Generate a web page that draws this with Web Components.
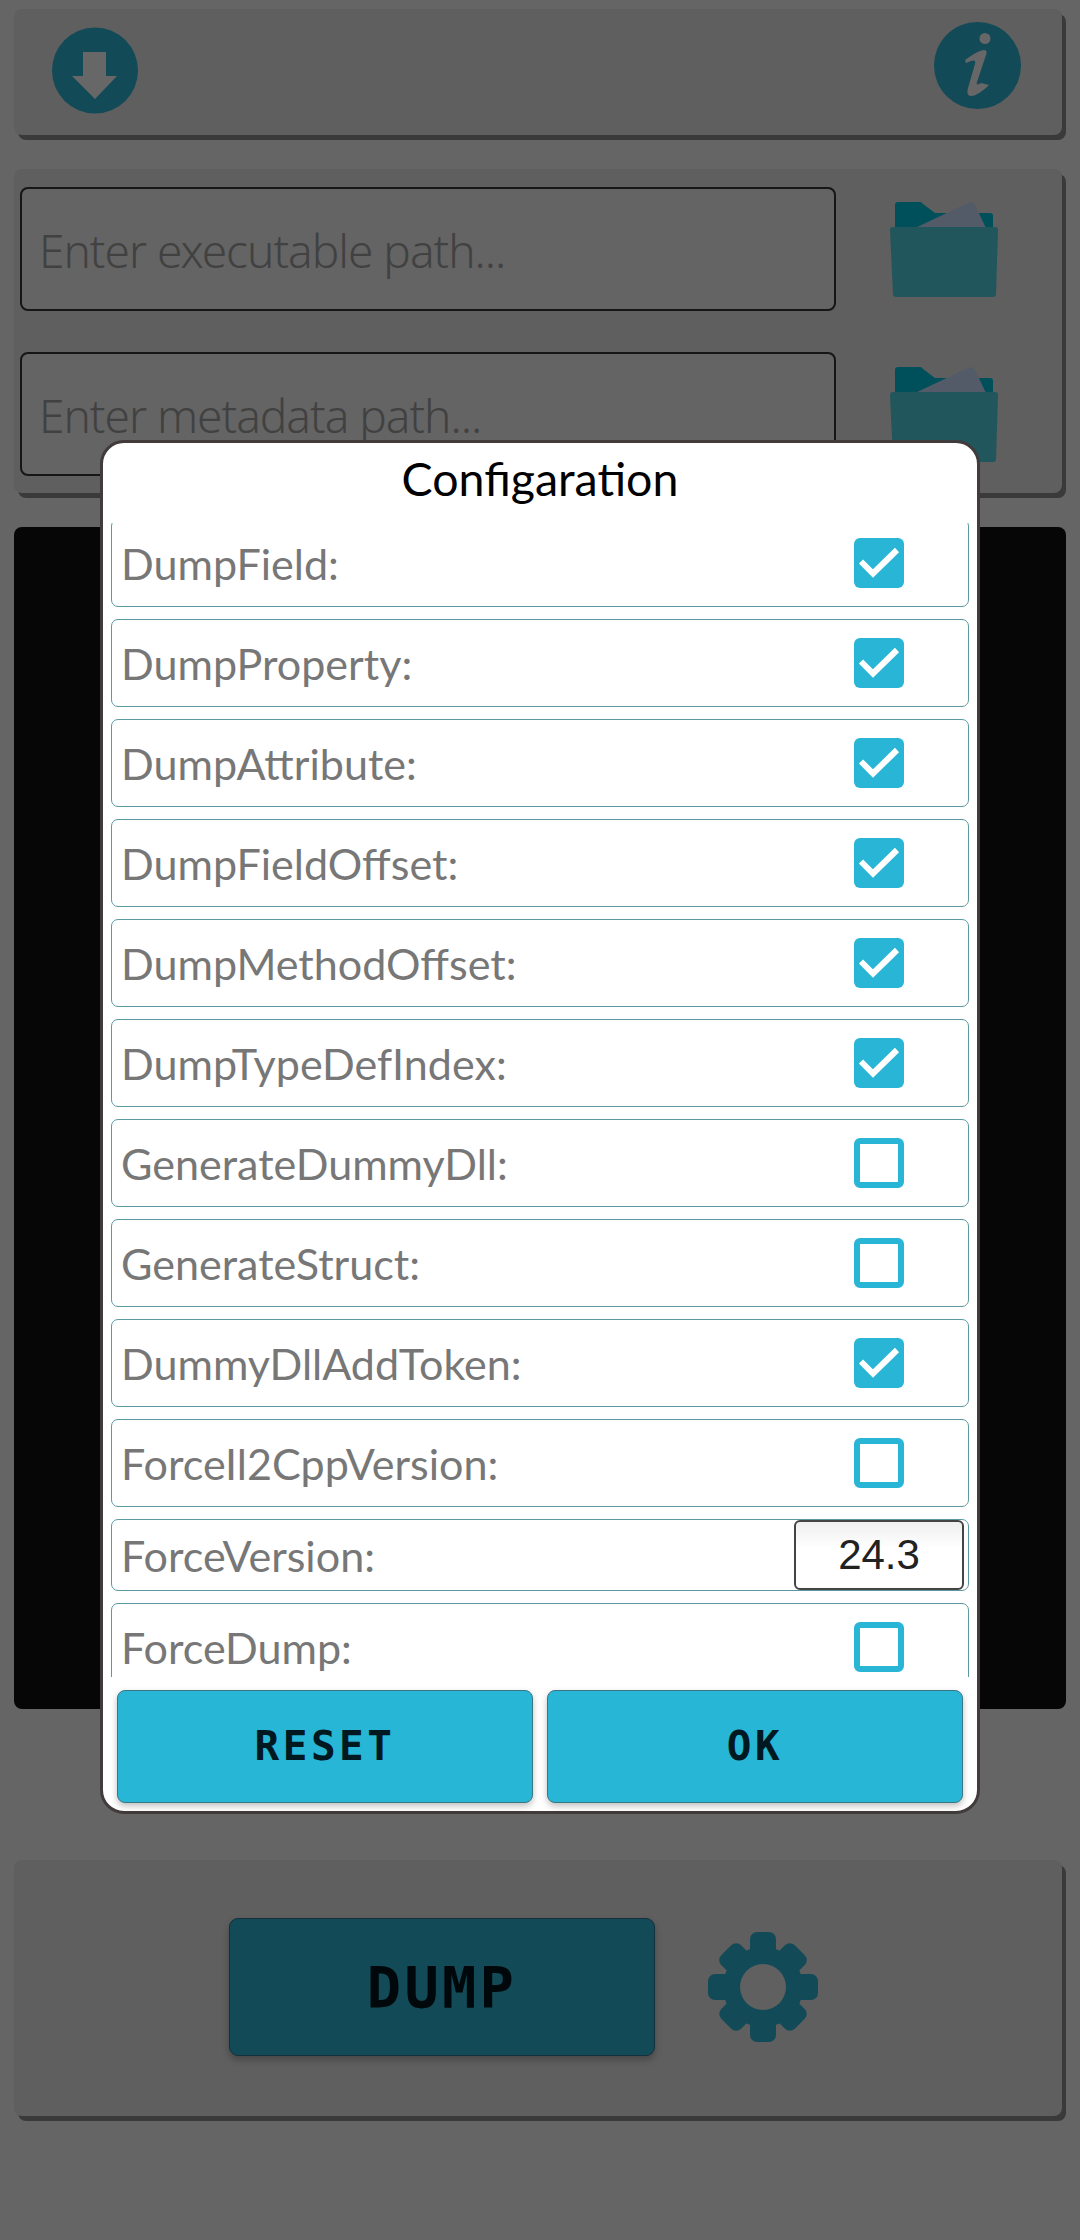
<!DOCTYPE html>
<html lang="en"><head><meta charset="utf-8"><title>Il2CppDumper</title>
<style>
html,body{margin:0;padding:0;background:#656565;}
body{width:1080px;height:2240px;overflow:hidden;position:relative;font-family:"Lato",sans-serif;}
</style></head><body>
<dump-app></dump-app>
<script>
function def(name, html, init){
  customElements.define(name, class extends HTMLElement{
    constructor(){super();this.attachShadow({mode:'open'}).innerHTML=html;}
    connectedCallback(){ if(init) init(this); }
  });
}
def('app-panel',`<style>
:host{display:block;box-sizing:border-box;background:#5f5f5f;border-radius:8px;box-shadow:4px 5px 0 0 #3a3a3a;margin-right:4px;}
</style><slot></slot>`);

def('icon-download',`<style>:host{display:block;width:86px;height:87px}svg{display:block}</style>
<svg width="86" height="87" viewBox="0 0 86 87"><circle cx="43" cy="43.5" r="43" fill="#124b57"/><path d="M31 25H54V49H65L43 72 20 49H31Z" fill="#676767"/></svg>`);

def('icon-info',`<style>:host{display:block;width:87px;height:87px}svg{display:block}</style>
<svg width="87" height="87" viewBox="0 0 87 87"><circle cx="43.5" cy="43.5" r="43.5" fill="#124b57"/><circle cx="51" cy="16.5" r="5.5" fill="#676767"/><path d="M31 38C38 33 44 29 50 28 53 28 53 31 52 33L43 60C42 63 44 63 47 61L55 63C49 69 42 74 37 74 33 74 33 70 34 66L41 42C42 38 40 38 37 39L32 41Z" fill="#676767"/></svg>`);

def('icon-folder',`<style>:host{display:block;width:108px;height:96px}svg{display:block}</style>
<svg width="108" height="96" viewBox="0 0 108 96">
<path d="M5 3Q5 0 8 0H30Q32 0 33 2L45 11H100Q103 11 103 14V28H5Z" fill="#00505b"/>
<path d="M25 26L78 1Q83-1 85 3L96 26Z" fill="#545b68"/>
<path d="M0 28Q0 25 3 25H105Q108 25 108 28L106 92Q106 95 103 95H6Q3 95 3 92Z" fill="#22565d"/></svg>`);

def('icon-gear',`<style>:host{display:block;width:110px;height:110px}svg{display:block}</style>
<svg width="110" height="110" viewBox="0 0 110 110"><g fill="#124b57">
<circle cx="55" cy="55" r="40"/>
<rect x="42" y="0" width="26" height="110" rx="7"/>
<rect x="0" y="42" width="110" height="26" rx="7"/>
<rect x="41" y="3" width="28" height="104" rx="7" transform="rotate(45 55 55)"/>
<rect x="41" y="3" width="28" height="104" rx="7" transform="rotate(-45 55 55)"/>
</g><circle cx="55" cy="55" r="23" fill="#606060"/></svg>`);

def('path-field',`<style>
:host{display:flex;align-items:center;box-sizing:border-box;width:816px;height:124px;border:2px solid #161616;border-radius:8px;background:#646464;padding:2px 0 0 17px;overflow:hidden;
font:300 46px/1 "Noto Sans",sans-serif;color:#414141;letter-spacing:-1px;white-space:nowrap}
</style><slot></slot>`);

def('path-row',`<style>
:host{display:flex;align-items:flex-start;}
.f{margin-left:54px;margin-top:15px}
</style><slot></slot><icon-folder class="f"></icon-folder>`);

def('check-box',`<style>
:host{display:block;box-sizing:border-box;width:50px;height:50px;border-radius:6px;flex:none}
:host([on]){background:#29b6d6}
:host(:not([on])){border:6px solid #29b6d6}
svg{display:block}
</style><svg width="50" height="50" viewBox="0 0 50 50"><path d="M7 23.5L19 35.5 43 12" fill="none" stroke="#fff" stroke-width="6"/></svg>`,
el=>{ if(!el.hasAttribute('on')) el.shadowRoot.querySelector('svg').style.display='none'; });

def('config-row',`<style>
:host{display:flex;align-items:center;justify-content:space-between;box-sizing:border-box;height:88px;flex:none;border:1.5px solid #5c9aa3;border-radius:7px;padding:0 64px 0 9px;
font:400 43.1px/1 "Lato",sans-serif;color:#777}
:host([compact]){height:72px;padding-right:4px}
.t{position:relative;top:1px}
</style><span class="t"><slot name="label"></slot></span><slot name="control"></slot>`);

def('num-field',`<style>
:host{display:flex;align-items:center;justify-content:center;box-sizing:border-box;width:170px;height:70px;border:2px solid #444;border-radius:6px;background:linear-gradient(#efefef,#fff 40%);
font:400 42px/1 "Liberation Sans",sans-serif;color:#222}
</style><slot></slot>`);

def('dlg-button',`<style>
:host{display:flex;flex:1;align-items:center;justify-content:center;box-sizing:border-box;height:113px;background:#28b6d6;border:1.5px solid #3b7687;border-radius:8px;box-shadow:0 3px 6px rgba(0,0,0,.25);
font:700 41px/1 "DejaVu Sans Mono",monospace;letter-spacing:3.5px;color:#00181f}
</style><slot></slot>`);

def('config-dialog',`<style>
:host{position:absolute;left:100px;top:440px;width:880px;height:1374px;box-sizing:border-box;background:#fff;border:3px solid #413b3b;border-radius:24px;display:flex;flex-direction:column}
.title{height:80px;flex:none;text-align:center;font:400 46.5px/71px "Lato",sans-serif;color:#000;font-variant-ligatures:common-ligatures}
.scroll{height:1154px;flex:none;overflow:hidden;padding:0 8px;box-sizing:border-box}
.list{display:flex;flex-direction:column;gap:12px;margin-top:-4px}
.foot{display:flex;gap:14px;padding:13px 14px 0 14px}
</style><div class="title">Configaration</div>
<div class="scroll"><div class="list"><slot></slot></div></div>
<div class="foot"><dlg-button>RESET</dlg-button><dlg-button>OK</dlg-button></div>`);

def('dump-button',`<style>
:host{display:flex;align-items:center;justify-content:center;box-sizing:border-box;width:426px;height:138px;padding-top:3px;background:#124b57;border:1.5px solid #15303a;border-radius:9px;box-shadow:0 4px 7px rgba(0,0,0,.25);
font:700 57px/1 "DejaVu Sans Mono",monospace;letter-spacing:3.3px;color:#00080c}
</style><slot></slot>`);

const rows=[['DumpField:',1],['DumpProperty:',1],['DumpAttribute:',1],['DumpFieldOffset:',1],['DumpMethodOffset:',1],['DumpTypeDefIndex:',1],['GenerateDummyDll:',0],['GenerateStruct:',0],['DummyDllAddToken:',1],['ForceIl2CppVersion:',0],['ForceVersion:',2],['ForceDump:',0]];
const rowHtml=rows.map(([l,s])=>s===2
 ?`<config-row compact><span slot="label">${l}</span><num-field slot="control">24.3</num-field></config-row>`
 :`<config-row><span slot="label">${l}</span><check-box slot="control"${s?' on':''}></check-box></config-row>`).join('');

def('dump-app',`<style>
:host{display:block;padding:9px 14px 0;box-sizing:border-box;height:2240px}
.top{height:126px;display:flex;justify-content:space-between;padding:13px 41px 0 38px;box-sizing:border-box;align-items:flex-start}
.top icon-download{margin-top:5px}
.paths{margin-top:34px;height:324px;padding:18px 0 0 6px;box-sizing:border-box;display:flex;flex-direction:column;gap:41px}
.console{margin-top:34px;height:1182px;background:#060606;border-radius:8px}
.bottom{margin-top:151px;height:256px;display:flex;align-items:flex-start;padding:58px 0 0 215px;box-sizing:border-box}
.bottom icon-gear{margin:14px 0 0 53px}
</style>
<app-panel class="top"><icon-download></icon-download><icon-info></icon-info></app-panel>
<app-panel class="paths">
<path-row><path-field>Enter executable path...</path-field></path-row>
<path-row><path-field>Enter metadata path...</path-field></path-row>
</app-panel>
<div class="console"></div>
<app-panel class="bottom"><dump-button>DUMP</dump-button><icon-gear></icon-gear></app-panel>
<config-dialog>${rowHtml}</config-dialog>`);
</script>
</body></html>
